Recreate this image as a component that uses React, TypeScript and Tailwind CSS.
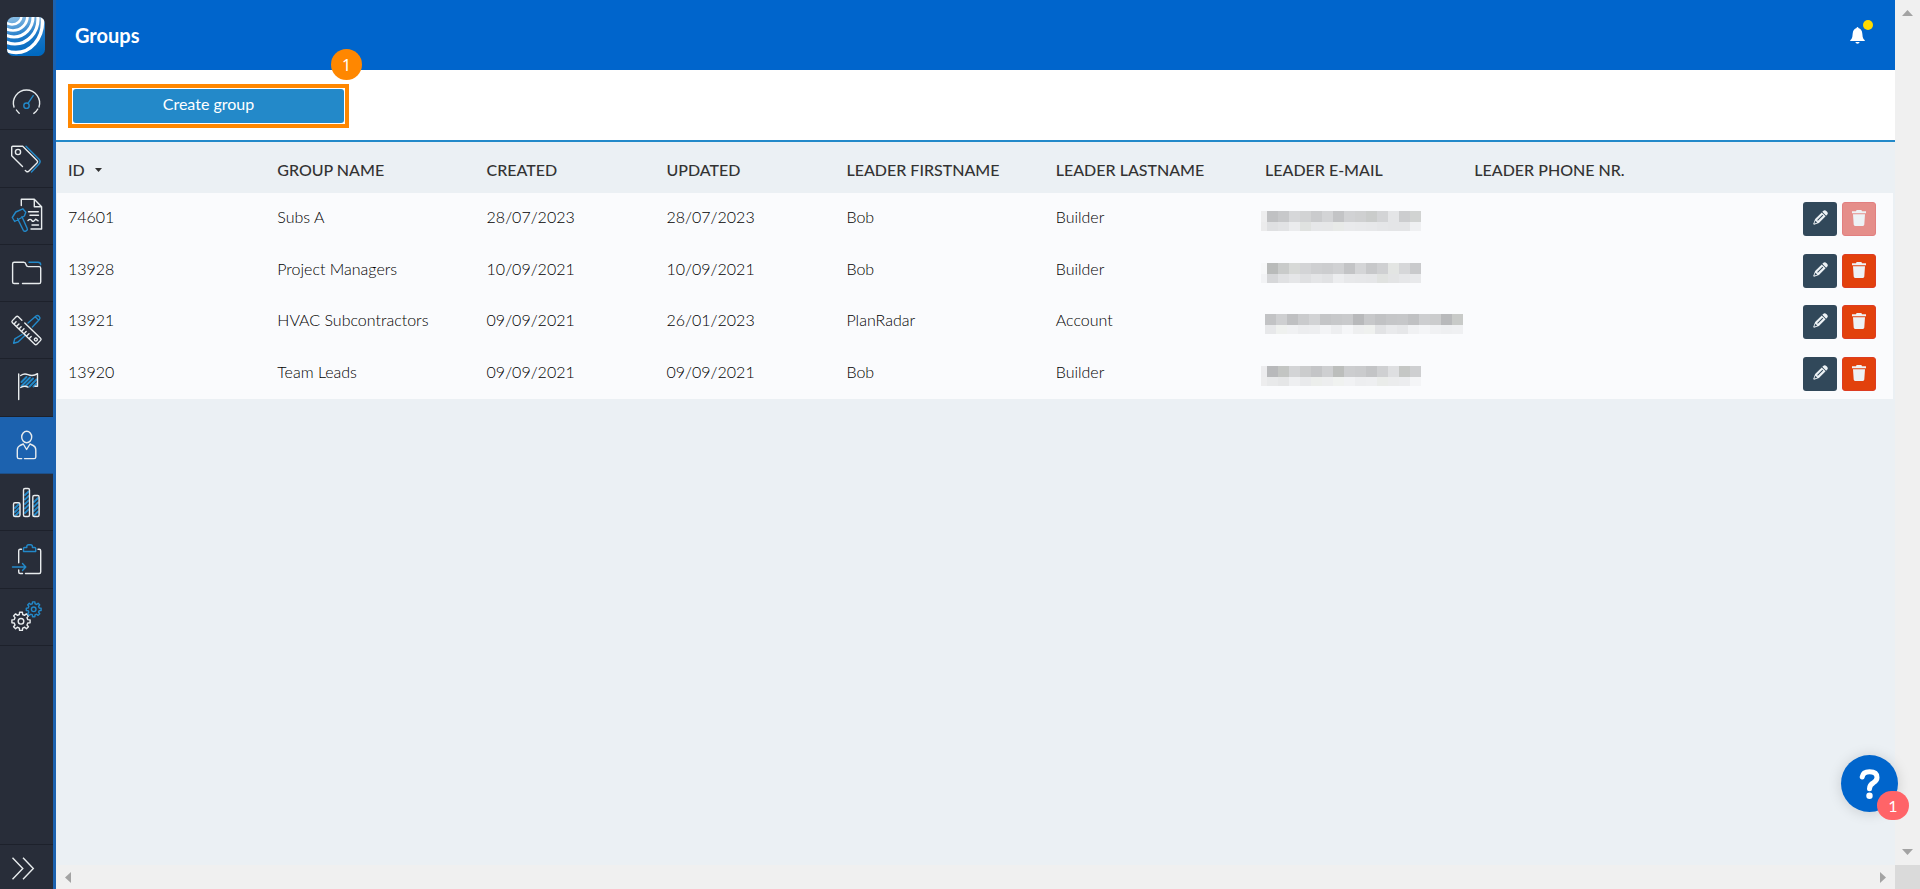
import type { ReactNode } from "react";

const WHITE = "#e8ecee";
const BLUE = "#2389c9";

type Group = {
  id: string;
  name: string;
  created: string;
  updated: string;
  first: string;
  last: string;
  mask: { lead: [string, string]; top: string[]; bottom: string[] };
  locked?: boolean;
};

const groups: Group[] = [
  {
    id: "74601", name: "Subs A", created: "28/07/2023", updated: "28/07/2023", first: "Bob", last: "Builder", locked: true,
    mask: {
      lead: ["#ededee", "#ebebec"],
      top: ["#c0c1c3", "#c7c8ca", "#d6d7d9", "#d2d3d4", "#cacbcd", "#d3d4d6", "#c3c4c6", "#d1d2d4", "#cfd0d1", "#cacccb", "#d3d4d6", "#e4e5e7", "#cccdcf", "#d1d3d2"],
      bottom: ["#dfe0e2", "#e2e3e5", "#ebecee", "#e0e2e0", "#e6e7e9", "#e6e7e8", "#e8eae8", "#e9eaec", "#e8e9eb", "#e7e8ea", "#e5e6e8", "#e4e5e7", "#e4e5e7", "#eff0f2"],
    },
  },
  {
    id: "13928", name: "Project Managers", created: "10/09/2021", updated: "10/09/2021", first: "Bob", last: "Builder",
    mask: {
      lead: ["#f7f8f9", "#f2f3f5"],
      top: ["#b9bbba", "#c9cbca", "#d7d9d7", "#d3d4d6", "#cecfd1", "#cccdcf", "#d0d1d3", "#c3c4c6", "#d4d5d7", "#c7c8ca", "#cfd0d2", "#e3e5e3", "#d6d7d9", "#c9cacc"],
      bottom: ["#d6d7d9", "#e0e1e3", "#e5e6e8", "#dfe0e2", "#e4e5e7", "#e1e2e4", "#ecedef", "#e7e8ea", "#e6e7e9", "#e5e6e8", "#e0e2e0", "#e3e4e5", "#e6e7e9", "#e8e9eb"],
    },
  },
  {
    id: "13921", name: "HVAC Subcontractors", created: "09/09/2021", updated: "26/01/2023", first: "PlanRadar", last: "Account",
    mask: {
      lead: ["transparent", "transparent"],
      top: ["#c2c3c5", "#cecfd1", "#bfc0c2", "#cacbcd", "#d2d3d5", "#c4c5c7", "#c7c8ca", "#c9cacc", "#b8b9bb", "#c7c8ca", "#c1c2c4", "#c5c6c8", "#c6c7c9", "#c0c1c3", "#cdced0", "#cbcccd", "#b8b9bb", "#c8cac8"],
      bottom: ["#e7e8ea", "#eff1ef", "#f0f1f3", "#ecedef", "#edeef0", "#f3f4f6", "#edeef0", "#f5f6f8", "#eeeff0", "#eff1ef", "#e2e3e5", "#e9eaec", "#e6e7e9", "#f0f1f3", "#f4f5f7", "#f0f1f3", "#eeeff1", "#eff0f2"],
    },
  },
  {
    id: "13920", name: "Team Leads", created: "09/09/2021", updated: "09/09/2021", first: "Bob", last: "Builder",
    mask: {
      lead: ["#ececee", "#ededee"],
      top: ["#b8b9bb", "#c3c5c3", "#d3d4d6", "#cbcccd", "#c4c5c7", "#cecfd1", "#bcbebc", "#cccdcf", "#cacbcd", "#c3c4c6", "#cfd0d2", "#dedfe1", "#c5c7c5", "#cecfd1"],
      bottom: ["#e8e9ea", "#e5e6e7", "#eeeff1", "#e9eaec", "#eceeec", "#edeeef", "#f0f2f0", "#f1f2f4", "#edeef0", "#eeeff1", "#eaecea", "#ebeced", "#ecedef", "#f4f5f7"],
    },
  },
];

function gearPath(cx: number, cy: number, outer: number, inner: number, teeth: number) {
  const pts: string[] = [];
  const step = (Math.PI * 2) / teeth;
  for (let i = 0; i < teeth; i++) {
    const a = i * step - Math.PI / 2;
    const corners: [number, number][] = [
      [a - step * 0.3, inner],
      [a - step * 0.2, outer],
      [a + step * 0.2, outer],
      [a + step * 0.3, inner],
    ];
    corners.forEach(([t, r]) => pts.push(`${(cx + Math.cos(t) * r).toFixed(2)} ${(cy + Math.sin(t) * r).toFixed(2)}`));
  }
  return `M${pts.join("L")}Z`;
}

function NavIcon({ top, children }: { top: number; children: ReactNode }) {
  return (
    <svg width="53" height="57" viewBox={`0 ${top} 53 57`} fill="none" stroke={WHITE} strokeWidth="1.4" strokeLinecap="round" strokeLinejoin="round" aria-hidden="true">
      {children}
    </svg>
  );
}

const navItems: { label: string; active?: boolean; icon: ReactNode }[] = [
  {
    label: "Dashboard",
    icon: (
      <NavIcon top={73}>
        <path d="M19.2 113.2a13.2 13.2 0 0 1-2.8-3.2M14 107a13.1 13.1 0 1 1 25 0M37.8 109a13 13 0 0 1-4 4.4" />
        <circle cx="26.5" cy="105.7" r="2.7" stroke={BLUE} />
        <path d="M28 103.3l5.2-7.600" stroke={BLUE} />
      </NavIcon>
    ),
  },
  {
    label: "Tickets",
    icon: (
      <NavIcon top={130}>
        <path d="M22.5 166.5L11.7 155.8v-8.500q0-1 1-1h10L37 160.500q1.300 1.300 0 2.600l-8 8q-1.200 1.200-2.700.2l-1-.9" />
        <circle cx="18" cy="152" r="2.600" />
        <path d="M26 146.300l13 13q2.300 2.300 0 4.600l-7.500 8" stroke={BLUE} />
      </NavIcon>
    ),
  },
  {
    label: "Forms",
    icon: (
      <NavIcon top={188}>
        <path d="M21.300 205.500v-6.200h13l7.300 7.400V229H31M34.300 199.500v7.200h7.200M28.500 211.700h9.800M30 215.300h8.500M32 225h6.500M28 220.500q2.300-2.200 3.800 0t3.800-1.300l2.500 1.600" />
        <path d="M12.300 217.500l3.500-5.500 7-3.200 3 3.500-1.400 3.700-9.700 5.500zM17.500 218.500l5.800 11.800q1 1.500 2.500.8 2.200-1 1.400-2.600L22 216.700" stroke={BLUE} />
      </NavIcon>
    ),
  },
  {
    label: "Documents",
    icon: (
      <NavIcon top={245}>
        <path d="M18.500 283.500h-4.300q-1.600 0-1.600-1.600v-18q0-1.600 1.600-1.600h9.400q2 0 2.300 2l.4 1q.4 1.300 1.800 1.300h11q1.600 0 1.600 1.600v13.700q0 1.600-1.600 1.600H22.500" />
        <path d="M29 262.300h9q2.600 0 2.700 2.500" stroke={BLUE} />
      </NavIcon>
    ),
  },
  {
    label: "Plans",
    icon: (
      <NavIcon top={302}>
        <path d="M22 334.500l-7.200 4.300-1.200 4.400 4.400-1.200 7.500-7M28 323l8-7q1.500-1.300 3.200.4 1.500 1.600.2 3.200l-7 7.500M36 317.500l2.500 2.500" stroke={BLUE} />
        <g transform="rotate(44 26.500 330.500)">
          <path d="M20 326.300h22q1.500 0 1.500 1.500v5.400q0 1.500-1.500 1.500H11q-1.500 0-1.500-1.500v-5.400q0-1.500 1.500-1.500h5M13 334v-2.500M16.500 334v-3M20 334v-2.500M23.500 334v-3M27 334v-2.500M30.500 334v-3M34 334v-2.500" />
          <circle cx="39.500" cy="330.500" r="1.500" />
        </g>
      </NavIcon>
    ),
  },
  {
    label: "Milestones",
    icon: (
      <NavIcon top={360}>
        <path d="M21.500 383l5-5M21.500 387l8.500-8.500M25.500 387l7.500-7.500M29.500 387.500l7-7M33.500 387.500l3-3" stroke={BLUE} strokeWidth="2" />
        <path d="M18.700 375v25.500M20.700 376.500q3.500-2.400 7.300-.8 5 2 9.500-1v12.600h-2.500M20.700 388.500q3.800-2.200 7.300-.4" />
      </NavIcon>
    ),
  },
  {
    label: "Users",
    active: true,
    icon: (
      <NavIcon top={417}>
        <ellipse cx="26.700" cy="437" rx="5" ry="5.700" />
        <path d="M21.700 458.600H19q-1.700 0-1.700-1.700v-7q0-3 2.700-4.400l3.300-1.500 3.300 5.500 3.400-5.500 3.200 1.500q2.600 1.300 2.600 4.400v7q0 1.700-1.700 1.700h-9.600" />
      </NavIcon>
    ),
  },
  {
    label: "Statistics",
    icon: (
      <NavIcon top={474}>
        <path d="M15 508l4-4M15 512l4-4M15 516l4-4M25 495l3.500-3.500M25 499.500l3.500-3.500M25 504l3.500-3.500M25 508.500l3.500-3.500M25 513l3.500-3.500M34 502l4-4M34 506.500l4-4M34 511l4-4M34 515.500l4-4" stroke={BLUE} strokeWidth="1.800" />
        <rect x="13.500" y="502.800" width="6.500" height="13.700" rx="1.500" />
        <rect x="23.500" y="488.500" width="6" height="28" rx="1.500" />
        <rect x="32.800" y="495.500" width="6.300" height="21" rx="1.500" />
      </NavIcon>
    ),
  },
  {
    label: "Export",
    icon: (
      <NavIcon top={531}>
        <path d="M21.500 549.300h-1.300q-1.500 0-1.500 1.500v12M18.700 570v2q0 1.500 1.500 1.500H22.500M25.500 573.500h13.700q1.500 0 1.500-1.500v-21.200q0-1.500-1.500-1.500H38" />
        <path d="M23.500 551.500v-3q0-1 1-1h2.300v-1q0-1.800 1.800-1.800h2q1.800 0 1.800 1.800v1h2.300q1 0 1 1v3zM12.500 567h13M22.500 563.500l3.300 3.500-3.300 3.500" stroke={BLUE} />
      </NavIcon>
    ),
  },
  {
    label: "Settings",
    icon: (
      <NavIcon top={589}>
        <path d={gearPath(21, 621.3, 9.2, 7, 8)} />
        <circle cx="21" cy="621.300" r="2.800" />
        <path d={gearPath(33.7, 609.3, 7.5, 5.7, 8)} stroke={BLUE} />
        <circle cx="33.700" cy="609.300" r="2.300" stroke={BLUE} />
      </NavIcon>
    ),
  },
];

function Logo() {
  return (
    <svg width="38" height="39" viewBox="0 0 38 39" aria-hidden="true">
      <defs>
        <linearGradient id="logoBlue" x1="0.300" y1="0" x2="0.500" y2="1">
          <stop offset="0" stopColor="#86bbe4" />
          <stop offset="0.500" stopColor="#1b78c8" />
          <stop offset="1" stopColor="#0069c0" />
        </linearGradient>
        <clipPath id="logoClip">
          <rect width="38" height="39" rx="6.500" />
        </clipPath>
      </defs>
      <g clipPath="url(#logoClip)">
        <rect width="38" height="39" fill="url(#logoBlue)" />
        <g fill="none" stroke="#fff">
          <ellipse cx="5" cy="-1" rx="9.500" ry="8.500" strokeWidth="2.400" />
          <ellipse cx="6" cy="-1" rx="14.500" ry="14.500" strokeWidth="2.700" />
          <ellipse cx="7" cy="0" rx="19" ry="20" strokeWidth="3" />
          <ellipse cx="8" cy="2" rx="23" ry="25" strokeWidth="3.200" />
          <ellipse cx="9" cy="5" rx="26.500" ry="30.500" strokeWidth="3.400" />
        </g>
      </g>
    </svg>
  );
}

function PencilIcon() {
  return (
    <svg width="16" height="16" viewBox="0 0 16 16" aria-hidden="true">
      <g transform="rotate(45 8 8)" fill="#edf2f5">
        <path d="M5.300.4Q5.300-1.400 8-1.400T10.700.4V2H5.300z" />
        <path d="M5.300 2.800h5.400v9.400L8.600 17H7.400l-2.100-4.800z" />
        <path d="M7.500 4h1v7.500h-1z" fill="#31485a" />
        <path d="M6.700 13.200h2.600L8.300 15.600h-.6z" fill="#31485a" />
      </g>
    </svg>
  );
}

function TrashIcon() {
  return (
    <svg width="14" height="16" viewBox="0 0 14 16" fill="#edf2f5" aria-hidden="true">
      <path d="M0 1.200h4L4.600 0h4.800l.6 1.200h4v2H0zM1 4.200h12l-.7 10.400q-.1 1.400-1.400 1.400H3.100q-1.300 0-1.400-1.400z" />
    </svg>
  );
}

function MaskedEmail({ mask }: { mask: Group["mask"] }) {
  return (
    <div className="-ml-1" role="img" aria-label="Hidden e-mail">
      <div className="flex">
        <div className="h-[11px] w-1.5" style={{ backgroundColor: mask.lead[0] }} />
        {mask.top.map((c, i) => (
          <div key={i} className="h-[11px] w-[11px] shrink-0" style={{ backgroundColor: c }} />
        ))}
      </div>
      <div className="flex">
        <div className="h-[9px] w-1.5" style={{ backgroundColor: mask.lead[1] }} />
        {mask.bottom.map((c, i) => (
          <div key={i} className="h-[9px] w-[11px] shrink-0" style={{ backgroundColor: c }} />
        ))}
      </div>
    </div>
  );
}

function Arrow({ d, w, h }: { d: string; w: number; h: number }) {
  return (
    <svg width={w} height={h} viewBox={`0 0 ${w} ${h}`} fill="#a3a3a3" aria-hidden="true">
      <path d={d} />
    </svg>
  );
}

const headings = ["GROUP NAME", "CREATED", "UPDATED", "LEADER FIRSTNAME", "LEADER LASTNAME", "LEADER E-MAIL", "LEADER PHONE NR."];

export default function App() {
  return (
    <div className="flex h-screen overflow-hidden bg-[#ebf0f4] font-['Lato',sans-serif] text-base text-[#333]">
      <aside className="flex w-14 shrink-0 flex-col border-r-3 border-[#1c62af] bg-[#282d39]">
        <a href="#home" aria-label="Home" className="flex h-[73px] shrink-0 justify-center pt-[17px] pr-px">
          <Logo />
        </a>
        <nav className="grid h-[573px] shrink-0 auto-rows-fr">
          {navItems.map((item) => (
            <a
              key={item.label}
              href={`#${item.label.toLowerCase()}`}
              aria-label={item.label}
              className={item.active ? "overflow-hidden border-b border-[#1d4f88] bg-[#1c62af]" : "overflow-hidden border-b border-[#1d212b]"}
            >
              {item.icon}
            </a>
          ))}
        </nav>
        <button type="button" aria-label="Expand menu" className="mt-auto flex h-[45px] items-center border-t border-[#1d212b] pt-0.5 pl-3">
          <svg width="24" height="23" viewBox="0 0 24 23" fill="none" stroke={WHITE} strokeWidth="1.400" aria-hidden="true">
            <path d="M.5 .8l10.300 10.700L.5 22.200M11 .8l10.300 10.700L11 22.200" />
          </svg>
        </button>
      </aside>

      <div className="flex min-w-0 flex-1 flex-col">
        <div className="flex min-h-0 flex-1">
          <main className="min-w-0 flex-1">
            <header className="flex h-[70px] items-center justify-between bg-[#0065cc] pr-[30px] pl-[19px]">
              <h1 className="text-xl font-bold text-white">Groups</h1>
              <button type="button" aria-label="Notifications" className="relative">
                <svg width="15" height="17" viewBox="0 0 15 17" fill="#fff" aria-hidden="true">
                  <path d="M7.500 0q.9 0 .9 1Q12 2 12.300 6.500q.2 4.300 1.200 5.400l1.300 1.300q.4.800-.5.800H.7q-.9 0-.5-.8l1.300-1.300q1-1.100 1.200-5.400Q3 2 6.600 1q0-1 .9-1zM5.300 15h4.400q-.6 1.700-2.200 1.700T5.300 15z" />
                </svg>
                <span className="absolute -top-[7px] -right-2 size-2.5 rounded-full bg-[#ffdb00]" />
              </button>
            </header>

            <div className="flex h-[72px] items-start border-b-2 border-[#2389c9] bg-white pt-3.5 pl-3">
              <div className="relative w-[281px] border-4 border-[#ff8700] p-px">
                <button type="button" className="h-[34px] w-full rounded-[3px] bg-[#2389c9] pb-1 text-base text-white">
                  Create group
                </button>
                <span className="absolute -top-[39px] -right-[17px] flex size-[31px] items-center justify-center rounded-full bg-[#ff8700] font-['Noto_Sans',sans-serif] text-base text-white">
                  1
                </span>
              </div>
            </div>

            <div className="mr-0.5 ml-px">
              <table className="w-full table-fixed border-collapse text-left">
                <colgroup>
                  <col className="w-[11.4%]" />
                  <col className="w-[11.4%]" />
                  <col className="w-[9.8%]" />
                  <col className="w-[9.8%]" />
                  <col className="w-[11.4%]" />
                  <col className="w-[11.4%]" />
                  <col className="w-[11.4%]" />
                  <col className="w-[11.4%]" />
                  <col />
                </colgroup>
                <thead>
                  <tr className="h-[51px] whitespace-nowrap">
                    <th className="pt-1 pl-[11px] font-medium" aria-sort="descending">
                      <span className="flex items-center gap-2.5">
                        ID
                        <svg width="7" height="4" viewBox="0 0 7 4" fill="#333" aria-hidden="true">
                          <path d="M0 0h7L3.500 4z" />
                        </svg>
                      </span>
                    </th>
                    {headings.map((h) => (
                      <th key={h} className="pt-1 pl-[11px] font-medium">
                        {h}
                      </th>
                    ))}
                    <th aria-label="Actions" />
                  </tr>
                </thead>
                <tbody className="bg-[#fafbfd] font-light text-black">
                  {groups.map((g) => (
                    <tr key={g.id} className="whitespace-nowrap odd:h-[52px] even:h-[51px]">
                      <td className="pb-1 pl-[11px]">{g.id}</td>
                      <td className="pb-1 pl-[11px]">{g.name}</td>
                      <td className="pb-1 pl-[11px]">{g.created}</td>
                      <td className="pb-1 pl-[11px]">{g.updated}</td>
                      <td className="pb-1 pl-[11px]">{g.first}</td>
                      <td className="pb-1 pl-[11px]">{g.last}</td>
                      <td className="pt-1 pl-[11px]">
                        <MaskedEmail mask={g.mask} />
                      </td>
                      <td />
                      <td className="pr-[17px]">
                        <div className="flex justify-end gap-[5px]">
                          <button type="button" aria-label={`Edit ${g.name}`} className="flex size-[34px] items-center justify-center rounded-[3px] bg-[#31485a] pb-0.5">
                            <PencilIcon />
                          </button>
                          <button
                            type="button"
                            disabled={g.locked}
                            aria-label={`Delete ${g.name}`}
                            className={
                              g.locked
                                ? "flex size-[34px] items-center justify-center rounded-[3px] border border-[#e27f80] bg-[#e58e8a] pb-0.5"
                                : "flex size-[34px] items-center justify-center rounded-[3px] border border-[#dd3c22] bg-[#e2410c] pb-0.5"
                            }
                          >
                            <TrashIcon />
                          </button>
                        </div>
                      </td>
                    </tr>
                  ))}
                </tbody>
              </table>
            </div>
          </main>
          <div className="flex w-[25px] shrink-0 flex-col items-center justify-between bg-[#f0f0f0] py-2.5">
            <Arrow d="M0 6L5.500 0 11 6z" w={11} h={6} />
            <Arrow d="M0 0L5.500 6 11 0z" w={11} h={6} />
          </div>
        </div>
        <div className="flex h-6 shrink-0">
          <div className="flex flex-1 items-center justify-between bg-[#f0f0f0] px-[9px]">
            <Arrow d="M6 0L0 5.500 6 11z" w={6} h={11} />
            <Arrow d="M0 0l6 5.500L0 11z" w={6} h={11} />
          </div>
          <div className="w-[25px] bg-[#dadada]" />
        </div>
      </div>

      <button type="button" aria-label="Help" className="fixed right-[22px] bottom-[77px] flex size-[57px] items-center justify-center rounded-full bg-[#0065cc] shadow-[0_1px_14px_rgba(0,0,0,0.15)]">
        <svg width="22" height="30" viewBox="0 0 22 30" fill="none" stroke="#fff" strokeWidth="5" strokeLinecap="round" strokeLinejoin="round" aria-hidden="true">
          <path d="M3.200 8Q4 2.800 10.500 2.800q7.500 0 7.500 5.700 0 3-3.500 5.200-4 2.200-4 6" />
          <circle cx="10.500" cy="26.700" r="3.200" fill="#fff" stroke="none" />
        </svg>
        <span className="absolute -right-[11px] -bottom-2 flex h-[29px] w-8 items-center justify-center rounded-full bg-[#ff6468] text-base text-white">
          1
        </span>
      </button>
    </div>
  );
}
